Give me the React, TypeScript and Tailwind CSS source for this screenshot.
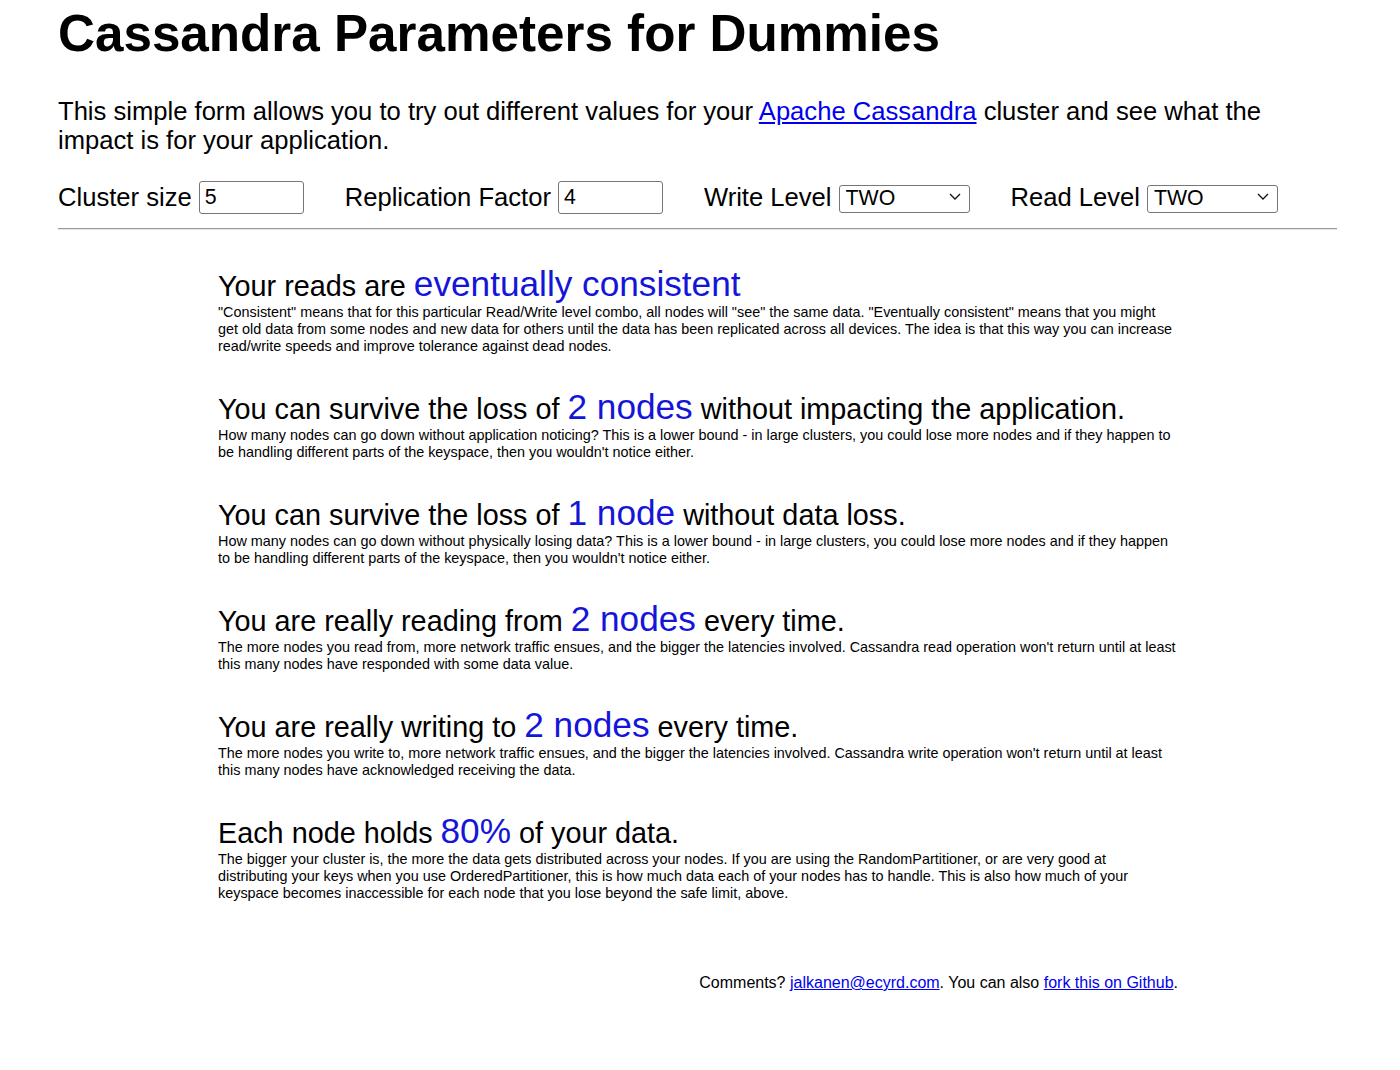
import React from 'react';

const results = [
  {
    before: 'Your reads are ',
    value: 'eventually consistent',
    after: '',
    text: '"Consistent" means that for this particular Read/Write level combo, all nodes will "see" the same data. "Eventually consistent" means that you might get old data from some nodes and new data for others until the data has been replicated across all devices. The idea is that this way you can increase read/write speeds and improve tolerance against dead nodes.',
  },
  {
    before: 'You can survive the loss of ',
    value: '2 nodes',
    after: ' without impacting the application.',
    text: "How many nodes can go down without application noticing? This is a lower bound - in large clusters, you could lose more nodes and if they happen to be handling different parts of the keyspace, then you wouldn't notice either.",
  },
  {
    before: 'You can survive the loss of ',
    value: '1 node',
    after: ' without data loss.',
    text: "How many nodes can go down without physically losing data? This is a lower bound - in large clusters, you could lose more nodes and if they happen to be handling different parts of the keyspace, then you wouldn't notice either.",
  },
  {
    before: 'You are really reading from ',
    value: '2 nodes',
    after: ' every time.',
    text: "The more nodes you read from, more network traffic ensues, and the bigger the latencies involved. Cassandra read operation won't return until at least this many nodes have responded with some data value.",
  },
  {
    before: 'You are really writing to ',
    value: '2 nodes',
    after: ' every time.',
    text: "The more nodes you write to, more network traffic ensues, and the bigger the latencies involved. Cassandra write operation won't return until at least this many nodes have acknowledged receiving the data.",
  },
  {
    before: 'Each node holds ',
    value: '80%',
    after: ' of your data.',
    text: 'The bigger your cluster is, the more the data gets distributed across your nodes. If you are using the RandomPartitioner, or are very good at distributing your keys when you use OrderedPartitioner, this is how much data each of your nodes has to handle. This is also how much of your keyspace becomes inaccessible for each node that you lose beyond the safe limit, above.',
  },
];

const levels = ['ANY', 'ONE', 'TWO', 'THREE', 'QUORUM', 'ALL'];

const LevelSelect = () => {
  return (
    <div className="relative ml-[7px]">
      <select
        defaultValue="TWO"
        className="w-[131px] h-[28px] appearance-none rounded-[3px] border border-[#767676] bg-white pl-[6px] text-[21.3px] leading-none text-black outline-none"
      >
        {levels.map((l) => (
          <option key={l}>{l}</option>
        ))}
      </select>
      <svg
        className="pointer-events-none absolute right-[9px] top-[11px]"
        width="12"
        height="7"
        viewBox="0 0 12 7"
        fill="none"
      >
        <path d="M1 1l5 5 5-5" stroke="#111" strokeWidth="1.3" />
      </svg>
    </div>
  );
};

const NumberInput = ({ value }: { value: string }) => {
  return (
    <input
      type="text"
      defaultValue={value}
      className="ml-[7px] w-[105px] h-[33px] rounded-[3px] border border-[#767676] bg-white px-[5px] text-[21.3px] text-black outline-none"
    />
  );
};

const App = () => {
  return (
    <div className="min-h-screen bg-white pl-[58px] pr-[63px] pt-[4px] pb-[60px] text-black font-['Liberation_Sans',Arial,sans-serif]">
      <h1 className="text-[51.2px] font-bold leading-[normal]">Cassandra Parameters for Dummies</h1>

      <p className="mt-[34px] text-[25.6px] leading-[normal]">
        This simple form allows you to try out different values for your{' '}
        <a href="#" className="text-[#0000ee] underline">
          Apache Cassandra
        </a>{' '}
        cluster and see what the impact is for your application.
      </p>

      {/* Parameters */}
      <div className="mt-[26px] flex items-center gap-[41px] text-[25.6px] leading-[normal]">
        <div className="flex items-center">
          <span>Cluster size</span>
          <NumberInput value="5" />
        </div>
        <div className="flex items-center">
          <span>Replication Factor</span>
          <NumberInput value="4" />
        </div>
        <div className="flex items-center">
          <span>Write Level</span>
          <LevelSelect />
        </div>
        <div className="flex items-center">
          <span>Read Level</span>
          <LevelSelect />
        </div>
      </div>

      <div className="mt-[14px] border-t border-b border-t-[#9a9a9a] border-b-[#e6e6e6]" />

      {/* Results */}
      <div className="ml-[160px] w-[960px] pt-[2px]">
        {results.map((r, i) => (
          <div key={i} className="mt-[32px]">
            <h2 className="text-[28.8px] leading-[normal]">
              {r.before}
              <span className="text-[35.2px] text-[#1515d9]">{r.value}</span>
              {r.after}
            </h2>
            <p className="text-[14.4px] leading-[17px]">{r.text}</p>
          </div>
        ))}

        <p className="mt-[72px] text-right text-[16px] leading-[normal]">
          Comments?{' '}
          <a href="#" className="text-[#0000ee] underline">
            jalkanen@ecyrd.com
          </a>
          . You can also{' '}
          <a href="#" className="text-[#0000ee] underline">
            fork this on Github
          </a>
          .
        </p>
      </div>
    </div>
  );
};

export default App;
